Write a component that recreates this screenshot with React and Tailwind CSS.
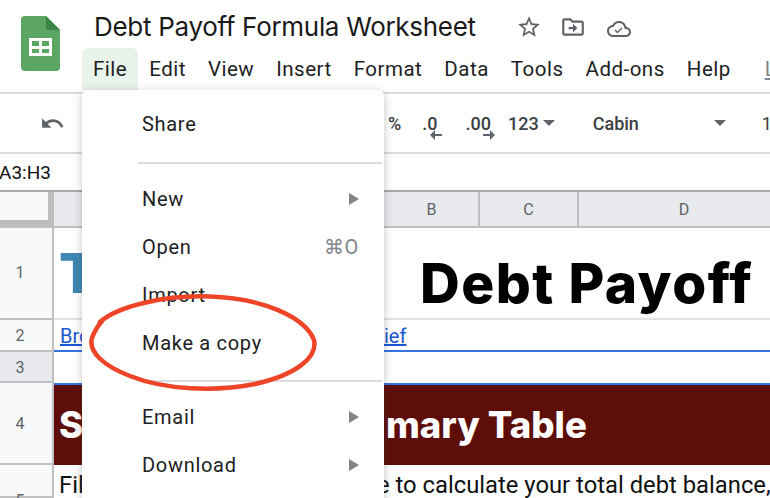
const ui = { fontFamily: "Roboto, sans-serif" };

const menuBar = ["File", "Edit", "View", "Insert", "Format", "Data", "Tools", "Add-ons", "Help"];

const SheetsLogo = () => (
  <svg width="39" height="55" viewBox="0 0 39 55" className="shrink-0">
    <path d="M4 0H25L39 14V51a4 4 0 0 1-4 4H4a4 4 0 0 1-4-4V4a4 4 0 0 1 4-4z" fill="#5aa662" />
    <path d="M25 0L39 14H28a3 3 0 0 1-3-3z" fill="#3d8546" />
    <path d="M8 22H31V40H8zM11 25V30H18V25zM21 25V30H28V25zM11 33V37H18V33zM21 33V37H28V33z" fill="#fff" fillRule="evenodd" />
  </svg>
);

const Undo = () => (
  <svg width="25" height="25" viewBox="0 0 24 24" fill="#5f6368" className="shrink-0">
    <path d="M12.5 8c-2.65 0-5.05.99-6.9 2.6L2 7v9h9l-3.62-3.62c1.39-1.16 3.16-1.88 5.12-1.88 3.54 0 6.55 2.31 7.6 5.5l2.37-.78C21.08 11.03 17.15 8 12.5 8z" />
  </svg>
);

const Star = () => (
  <svg width="26" height="26" viewBox="0 0 24 24" fill="#5f6368" className="shrink-0">
    <path d="M22 9.24l-7.19-.62L12 2 9.19 8.63 2 9.24l5.46 4.73L5.82 21 12 17.27 18.18 21l-1.63-7.03L22 9.24zM12 15.4l-3.76 2.27 1-4.28-3.32-2.88 4.38-.38L12 6.1l1.71 4.04 4.38.38-3.32 2.88 1 4.28L12 15.4z" />
  </svg>
);

const FolderMove = () => (
  <svg width="26" height="26" viewBox="0 0 24 24" fill="#5f6368" className="shrink-0 ml-[18px]">
    <path d="M20 6h-8l-2-2H4c-1.1 0-2 .9-2 2v12c0 1.1.9 2 2 2h16c1.1 0 2-.9 2-2V8c0-1.1-.9-2-2-2zm0 12H4V6h5.170l2 2H20v10zm-8-4H8v-2h4V9l4 4-4 4v-3z" />
  </svg>
);

const CloudDone = () => (
  <svg width="24" height="24" viewBox="0 0 24 24" fill="#5f6368" className="shrink-0 ml-[21px] mt-[4px]">
    <path d="M19.35 10.04C18.67 6.59 15.64 4 12 4 9.11 4 6.6 5.64 5.35 8.04 2.34 8.36 0 10.91 0 14c0 3.31 2.69 6 6 6h13c2.76 0 5-2.24 5-5 0-2.64-2.05-4.78-4.65-4.96zM19 18H6c-2.21 0-4-1.79-4-4 0-2.05 1.53-3.76 3.56-3.97l1.07-.11.5-.95C8.08 7.14 9.94 6 12 6c2.62 0 4.88 1.86 5.39 4.43l.3 1.5 1.53.11c1.56.1 2.78 1.41 2.78 2.96 0 1.65-1.35 3-3 3zm-8.5-3.6l-2-2-1 1 3 3 5-5-1-1z" />
  </svg>
);

const Caret = () => <span className="block w-0 h-0 border-x-[6px] border-x-transparent border-t-[6px] border-t-[#5f6368]" />;

const SmallArrow = ({ left }) => (
  <svg width="12" height="10" viewBox="0 0 12 10" className="absolute top-[20px] right-[-4px]" fill="#5f6368">
    <path d={left ? "M5 0L0 5l5 5V6h7V4H5z" : "M7 0l5 5-5 5V6H0V4h7z"} />
  </svg>
);

const MenuItem = ({ label, shortcut, sub }) => (
  <div className="h-12 flex items-center pl-[60px] pr-[25px] text-[20px] text-[#202124] tracking-[0.7px]">
    <span className="flex-1">{label}</span>
    {shortcut && <span className="text-[#80868b]">{shortcut}</span>}
    {sub && <span className="w-0 h-0 border-y-[6px] border-y-transparent border-l-[10px] border-l-[#80868b]" />}
  </div>
);

const RowHead = ({ n, className = "" }) => (
  <div className={`w-[54px] shrink-0 flex justify-center pr-[12px] border-r-2 border-b-2 border-[#c0c0c0] text-[16px] text-[#5f6368] ${className}`}>
    {n}
  </div>
);

export default function App() {
  return (
    <div className="relative w-[770px] h-[498px] overflow-hidden bg-white" style={ui}>
      {/* title + menu bar */}
      <div className="h-[94px] flex border-b-2 border-[#dadce0] pl-[21px]">
        <div className="pt-[16px]">
          <SheetsLogo />
        </div>
        <div className="pl-[22px] min-w-0">
          <div className="flex items-center h-[48px] pl-[12px] pt-[6px]">
            <span className="text-[26px] text-[#1a1a1a] whitespace-nowrap pb-[2px]" style={{ fontFamily: "Inter, sans-serif", letterSpacing: "-0.3px" }}>Debt Payoff Formula Worksheet</span>
            <div className="flex items-center ml-[40px]">
              <Star />
              <FolderMove />
              <CloudDone />
            </div>
          </div>
          <div className="flex items-start h-[42px] text-[20.5px] text-[#202124] whitespace-nowrap tracking-[0.5px]">
            {menuBar.map((m) => (
              <span key={m} className={`h-[42px] px-[11px] leading-[43px] rounded-t-md ${m === "File" ? "bg-[#e8f3ea]" : ""}`}>{m}</span>
            ))}
            <span className="ml-[23px] leading-[43px] text-[#80868b] underline">L</span>
          </div>
        </div>
      </div>

      {/* toolbar */}
      <div className="h-[60px] flex items-center border-b-2 border-[#dadce0] pl-[40px] text-[18px] text-[#3c4043] whitespace-nowrap">
        <Undo />
        <span className="ml-[323px] font-medium">%</span>
        <span className="relative ml-[21px] font-medium">.0<SmallArrow left /></span>
        <span className="relative ml-[28px] font-medium">.00<SmallArrow /></span>
        <span className="ml-[17px] font-medium">123</span>
        <span className="ml-[4px]"><Caret /></span>
        <span className="ml-[13px] h-[30px] w-[2px] bg-[#dadce0]" />
        <span className="ml-[25px] font-medium">Cabin</span>
        <span className="ml-[75px]"><Caret /></span>
        <span className="ml-[13px] h-[30px] w-[2px] bg-[#dadce0]" />
        <span className="ml-[23px]">1</span>
      </div>

      {/* formula bar */}
      <div className="h-[36px] flex items-center pt-[2px] text-[19px] text-[#111] -ml-[1px]">A3:H3</div>

      {/* column headers */}
      <div className="h-[38px] flex border-y-2 border-t-[#a9a9a9] border-b-[#c0c0c0] bg-[#e8eaed] text-[16px] text-[#5f6368]">
        <div className="w-[54px] shrink-0 bg-[#f8f9fa] border-r-[6px] border-b-[6px] border-[#bdbdbd]" />
        <div className="w-[330px] shrink-0" />
        <div className="w-[96px] shrink-0 flex items-center justify-center border-r-2 border-[#c0c0c0] pl-[1px] pt-[2px]">B</div>
        <div className="w-[99px] shrink-0 flex items-center justify-center border-r-2 border-[#c0c0c0] pt-[2px]">C</div>
        <div className="w-[210px] shrink-0 flex items-center justify-center pt-[2px]">D</div>
      </div>

      {/* rows */}
      <div className="flex h-[92px]">
        <RowHead n="1" className="bg-[#f8f9fa] items-center" />
        <div className="flex-1 flex items-center border-b-2 border-[#e3e3e3] pl-[5px] whitespace-nowrap font-extrabold" style={{ fontFamily: "Inter, sans-serif" }}>
          <span className="text-[55px] text-[#3f86b3] w-[361px]">T</span>
          <span className="text-[55px] text-black tracking-[1.5px] mt-[20px]">Debt Payoff</span>
        </div>
      </div>
      <div className="flex h-[32px]">
        <RowHead n="2" className="bg-[#f8f9fa] items-center pt-[2px]" />
        <div className="flex-1 flex items-center pl-[6px] pt-[2px] border-b-2 border-[#3574e0] text-[20px] text-[#1a56d0] underline whitespace-nowrap">
          <span className="w-[324px]">Bro</span>
          <span>ief</span>
        </div>
      </div>
      <div className="flex h-[31px]">
        <RowHead n="3" className="bg-[#e8eaed] items-center pt-[2px]" />
        <div className="flex-1" />
      </div>
      <div className="flex h-[82px]">
        <RowHead n="4" className="bg-[#f8f9fa] items-center pt-[2px]" />
        <div className="flex-1 flex items-center border-t-2 border-[#3574e0] bg-[#5e0e08] pl-[5px] text-[36.5px] font-extrabold text-white whitespace-nowrap" style={{ fontFamily: "Inter, sans-serif" }}>
          <span className="w-[327px]">S</span>
          <span>mary Table</span>
        </div>
      </div>
      <div className="flex h-[33px]">
        <RowHead n="5" className="bg-[#f8f9fa] border-b-0 items-start pt-[24px]" />
        <div className="flex-1 pl-[5px] pt-[3px] text-[23.8px] text-[#111] whitespace-nowrap">
          <span className="inline-block w-[318px]">Fil</span>
          <span>e to calculate your total debt balance,</span>
        </div>
      </div>

      {/* open file menu */}
      <div className="absolute left-[82px] top-[90px] w-[302px] h-[420px] bg-white rounded-md shadow-[0_2px_10px_rgba(60,64,67,0.3)] pt-[10px]">
        <MenuItem label="Share" />
        <div className="mt-[14px] mb-[11px] ml-[56px] mr-[2px] h-[2px] bg-[#dadce0]" />
        <MenuItem label="New" sub />
        <MenuItem label="Open" shortcut="⌘O" />
        <MenuItem label="Import" />
        <MenuItem label="Make a copy" />
        <div className="mt-[13px] mb-[11px] ml-[56px] mr-[2px] h-[2px] bg-[#dadce0]" />
        <MenuItem label="Email" sub />
        <MenuItem label="Download" sub />
      </div>

      {/* hand drawn oval */}
      <svg className="absolute left-0 top-0 pointer-events-none" width="770" height="498" fill="none">
        <path
          d="M100 322C118 306 165 295 210 296.500C262 298 305 317 314 340C318 358 295 375 255 384C215 392 165 390 130 376C104 366 88 352 92 338C94 332 97 327 102 321"
          stroke="#ee4528"
          strokeWidth="4.500"
          strokeLinecap="round"
        />
      </svg>
    </div>
  );
}
